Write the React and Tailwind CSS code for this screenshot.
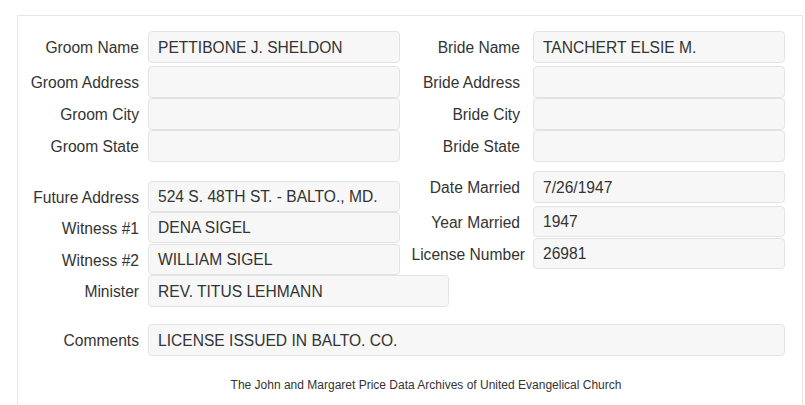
const Field = ({ label, value, labelW, gap, inputW, h = "h-[32px]", labelFix = "" }) => (
  <div className={`flex items-center ${h}`}>
    <div
      className={`${labelW} shrink-0 pt-[2px] text-right whitespace-nowrap text-[#333]`}
    >
      <span className={labelFix}>{label}</span>
    </div>
    <div
      className={`${gap} ${inputW} ${h} shrink-0 flex items-center px-[9px] pt-[1px] bg-[#f7f7f7] border border-[#e3e3e3] rounded-[4px] text-[#333] whitespace-nowrap`}
    >
      {value}
    </div>
  </div>
);

const App = () => {
  const left = { labelW: "w-[121px]", gap: "ml-[9px]", inputW: "w-[252px]" };
  const right = { labelW: "w-[120px]", gap: "ml-[13px]", inputW: "w-[252px]" };

  return (
    <div
      className="w-[805px] h-[405px] overflow-hidden bg-white text-[15.6px] leading-none"
      style={{ fontFamily: '"Liberation Sans", Arial, sans-serif' }}
    >
      <div className="ml-[17px] mt-[15px] w-[786px] h-[400px] border border-b-0 border-[#e6e6e6] pt-[15px]">
        {/* groom / bride */}
        <div className="flex">
          <div className="flex flex-col">
            <div className="mb-[3px]">
              <Field label="Groom Name" value="PETTIBONE J. SHELDON" {...left} />
            </div>
            <Field label="Groom Address" value="" {...left} />
            <Field label="Groom City" value="" {...left} />
            <Field label="Groom State" value="" {...left} />
          </div>
          <div className="flex flex-col">
            <div className="mb-[3px]">
              <Field label="Bride Name" value="TANCHERT ELSIE M." {...right} />
            </div>
            <Field label="Bride Address" value="" {...right} />
            <Field label="Bride City" value="" {...right} />
            <Field label="Bride State" value="" {...right} />
          </div>
        </div>

        {/* marriage details */}
        <div className="flex mt-[9px]">
          <div className="flex flex-col pt-[10px]">
            <Field label="Future Address" value="524 S. 48TH ST. - BALTO., MD." h="h-[31px]" {...left} />
            <Field label="Witness #1" value="DENA SIGEL" h="h-[31px]" {...left} />
            <div className="mt-[1px]">
              <Field label="Witness #2" value="WILLIAM SIGEL" h="h-[31px]" {...left} />
            </div>
            <Field
              label="Minister"
              value="REV. TITUS LEHMANN"
              labelW="w-[121px]"
              gap="ml-[9px]"
              inputW="w-[301px]"
            />
          </div>
          <div className="flex flex-col -ml-[49px]">
            <div className="mb-[3px]">
              <Field label="Date Married" value="7/26/1947" {...right} />
            </div>
            <Field label="Year Married" value="1947" h="h-[31px]" {...right} />
            <div className="mt-[1px]">
              <Field
                label="License Number"
                value="26981"
                h="h-[31px]"
                labelFix="relative left-[5px]"
                {...right}
              />
            </div>
          </div>
        </div>

        {/* comments */}
        <div className="mt-[17px]">
          <Field
            label="Comments"
            value="LICENSE ISSUED IN BALTO. CO."
            labelW="w-[121px]"
            gap="ml-[9px]"
            inputW="w-[637px]"
          />
        </div>

        <div className="mt-[23px] pl-[32px] flex justify-center text-[12px] text-[#333]">
          The John and Margaret Price Data Archives of United Evangelical Church
        </div>
      </div>
    </div>
  );
};

export default App;
